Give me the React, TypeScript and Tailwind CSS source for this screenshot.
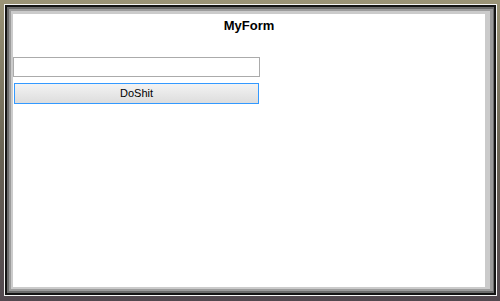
export default function App() {
  return (
    <div
      className="flex h-[301px] w-[500px] bg-gradient-to-b from-[#9b9477] via-[#6a6454] to-[#52484f] pb-[5px] pl-[4px] pr-[3px] pt-[4px]"
      style={{ fontFamily: '"Liberation Sans", Arial, sans-serif' }}
    >
      <div className="flex flex-1 border border-[#f4f4f4]">
        <div className="flex flex-1 border-2 border-[#141414]">
          <div className="flex flex-1 border-2 border-r border-[#6c6c6c]">
            <div className="flex flex-1 border-2 border-r-[3px] border-[#9c9c9c]">
              <div className="flex flex-1 border-2 border-t-[3px] border-r-[5px] border-[#cbcbcb]">
                <div className="flex flex-1 flex-col bg-white">
                  <h1 className="pt-[4px] text-center text-[13px] font-bold leading-[15px] text-black">
                    MyForm
                  </h1>
                  <input
                    type="text"
                    className="mt-[24px] h-[20px] w-[247px] border border-[#ababab] bg-white px-1 text-[11px] outline-none"
                  />
                  <button
                    type="button"
                    className="ml-[1px] mt-[6px] flex h-[21px] w-[245px] items-center justify-center border border-[#3399ff] bg-gradient-to-b from-[#f3f3f3] to-[#dddddd] text-[11px] text-black"
                  >
                    DoShit
                  </button>
                </div>
              </div>
            </div>
          </div>
        </div>
      </div>
    </div>
  );
}
